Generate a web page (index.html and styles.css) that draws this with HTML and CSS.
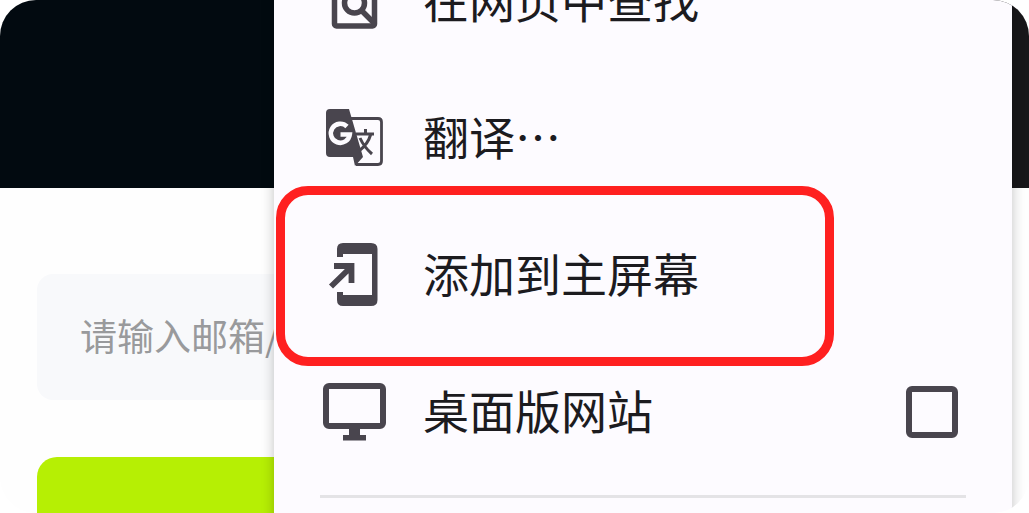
FILE: index.html
```html
<!DOCTYPE html>
<html lang="zh-CN">
<head>
<meta charset="utf-8">
<title>添加到主屏幕</title>
<link rel="stylesheet" href="styles.css">
</head>
<body>
<main class="screen">
  <header class="banner"></header>
  <form class="login">
    <input class="field" type="text" placeholder="请输入邮箱/" aria-label="邮箱">
    <button class="submit" type="button" aria-label="登录"></button>
  </form>

  <nav class="menu">
    <button class="item" type="button">
      <svg class="icon" viewBox="0 0 68 67" aria-hidden="true">
        <rect x="14.500" y="4" width="40" height="55" rx="2" fill="none" stroke="currentColor" stroke-width="5.500"/>
        <circle cx="34.500" cy="36" r="10" fill="none" stroke="currentColor" stroke-width="5.500"/>
        <path d="M41 43L55 57" stroke="currentColor" stroke-width="5.500"/>
      </svg>
      <span class="label">在网页中查找</span>
    </button>
    <button class="item" type="button">
      <svg class="icon" viewBox="0 0 68 67" aria-hidden="true">
        <path d="M30 14.500H58Q61.500 14.500 61.500 18V57Q61.500 60.500 58 60.500H36" fill="none" stroke="currentColor" stroke-width="2.800"/>
        <path d="M10 5H29L43 53L35 62L33 53H10Q6 53 6 49V9Q6 5 10 5Z" fill="currentColor"/>
        <path d="M27 22.500A9.500 9.500 0 1 0 29.800 30.500H20.500" fill="none" stroke="#fdfbff" stroke-width="4.600"/>
        <path d="M36 30H54M45.500 25V30M50.500 31Q48 40 39 47M40 34Q44 43 52 50" fill="none" stroke="currentColor" stroke-width="3"/>
      </svg>
      <span class="label">翻译⋯</span>
    </button>
    <button class="item marked" type="button">
      <svg class="icon" viewBox="0 0 68 67" aria-hidden="true">
        <path d="M17 16V8Q17 2 23 2H51Q57.500 2 57.500 8V59Q57.500 65 51 65H23Q17 65 17 59V51H23V54H52V13H23V16Z" fill="currentColor"/>
        <path d="M14 25H31.500V42M31 26L11 45.500" fill="none" stroke="currentColor" stroke-width="5.800"/>
      </svg>
      <span class="label">添加到主屏幕</span>
    </button>
    <label class="item">
      <svg class="icon" viewBox="0 0 68 67" aria-hidden="true">
        <rect x="6" y="8" width="57" height="40" rx="3" fill="none" stroke="currentColor" stroke-width="6"/>
        <path d="M29 50H40V57H46V62.500H23V57H29Z" fill="currentColor"/>
      </svg>
      <span class="label">桌面版网站</span>
      <input class="check" type="checkbox">
    </label>
    <hr class="divider">
  </nav>
</main>
</body>
</html>
```
FILE: styles.css
```css
*,
*::after {
  box-sizing: border-box;
}

body {
  margin: 0;
  background: #fff;
  font-family: "Noto Sans CJK SC", sans-serif;
}

.screen {
  position: relative;
  height: 100vh;
  overflow: hidden;
  border-radius: 36px;
  background: #fefefe;
}

.banner {
  height: 188px;
  background: linear-gradient(to left, #18171a 40px, #020a10 40px);
}

.login {
  display: flex;
  flex-direction: column;
  gap: 57px;
  padding: 86px 37px 0;
}

.field {
  width: 100%;
  height: 126px;
  padding: 0 43px 4px;
  border: 0;
  border-radius: 16px;
  background: #f8f9fb;
  font: 37px "Noto Sans CJK SC", sans-serif;
}

.field::placeholder {
  color: #999a9c;
  opacity: 1;
}

.submit {
  height: 126px;
  border: 0;
  border-radius: 20px;
  background: #b6ef04;
}

.menu {
  position: absolute;
  top: -68px;
  right: 17px;
  bottom: -40px;
  left: 274px;
  background: #fdfbff;
  box-shadow: 0 0 12px rgba(0, 0, 0, 0.24);
}

.item {
  position: relative;
  display: flex;
  align-items: center;
  gap: 35px;
  width: 100%;
  height: 137px;
  padding: 0 54px 0 46px;
  border: 0;
  background: none;
  color: #1c1b1f;
  font: 46px "Noto Sans CJK SC", sans-serif;
  text-align: left;
}

.icon {
  flex: none;
  width: 68px;
  height: 67px;
  color: #49454e;
}

.label {
  flex: 1;
  padding-bottom: 5px;
}

.marked::after {
  content: "";
  position: absolute;
  top: -20px;
  bottom: -23px;
  left: 2px;
  width: 558px;
  border: 9px solid #ff2020;
  border-radius: 32px;
}

.check {
  appearance: none;
  flex: none;
  width: 52px;
  height: 52px;
  margin: 0;
  border: 6px solid #49454e;
  border-radius: 6px;
}

.divider {
  height: 3px;
  margin: 15px 46px 0;
  border: 0;
  background: #e4e3e6;
}
```
